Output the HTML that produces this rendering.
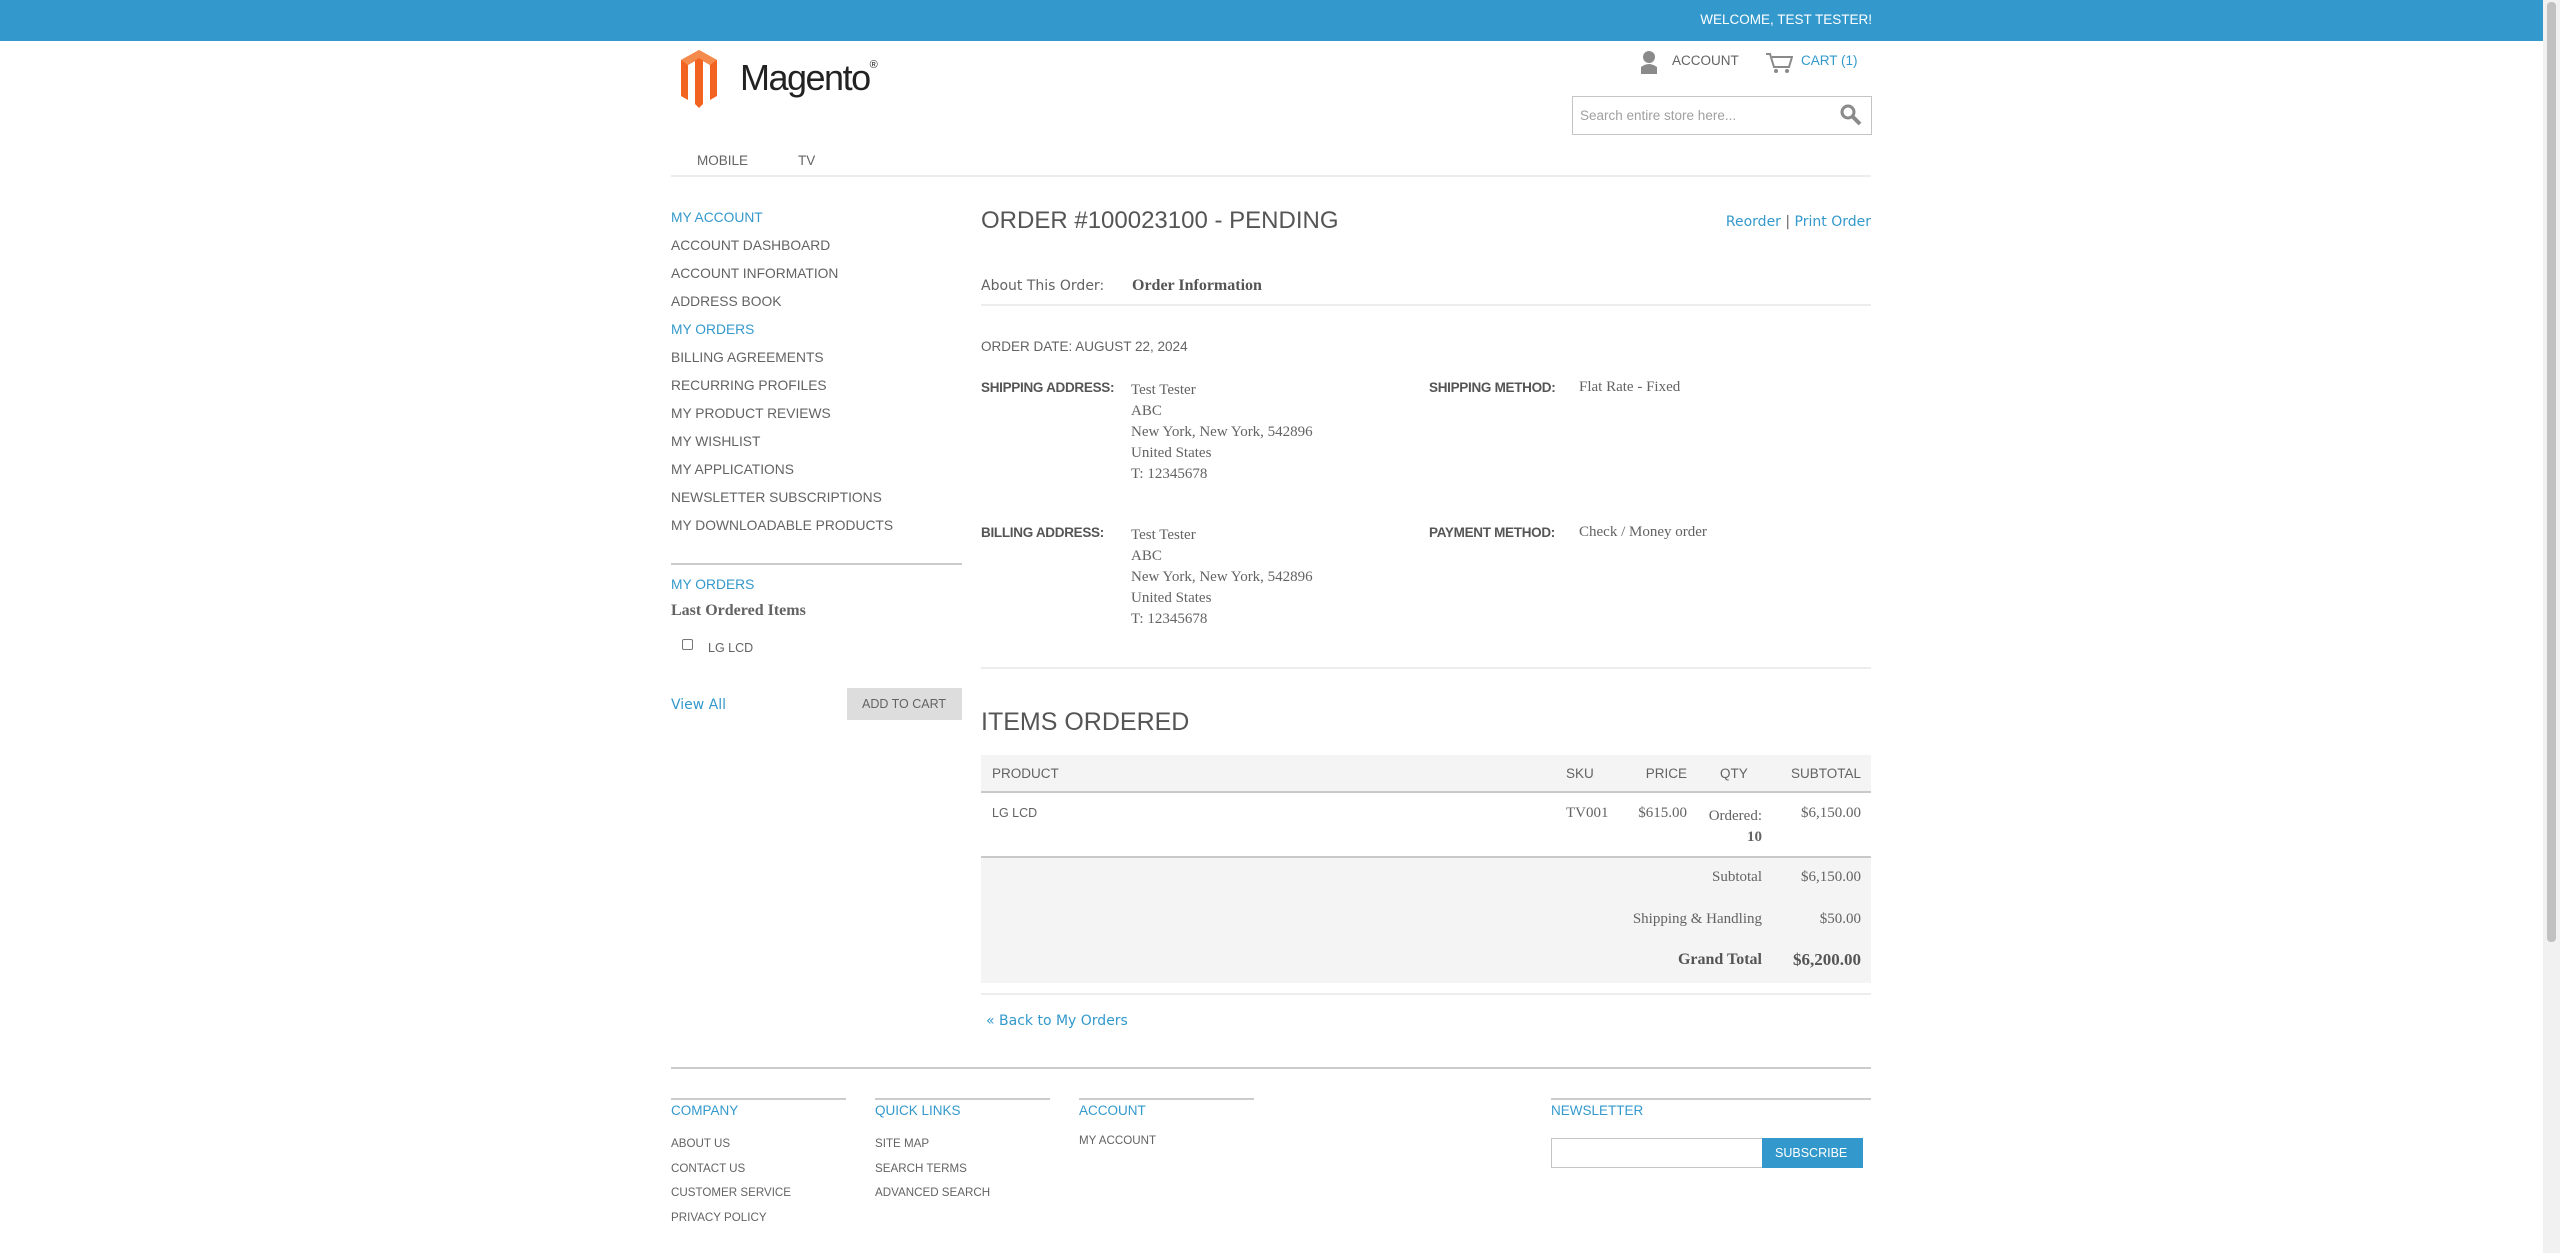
<!DOCTYPE html>
<html><head><meta charset="utf-8"><style>
*{margin:0;padding:0;box-sizing:border-box}
body{width:2560px;height:1253px;background:#fff;position:relative;overflow:hidden;font-family:"Liberation Sans",sans-serif;color:#636363}
.a{position:absolute;white-space:nowrap;line-height:1}
.s{font-family:"Liberation Serif",serif}
.b{color:#3399cc}
.hr{position:absolute;height:2px;background:#ededed}
.nav{font-size:13.8px;left:671px}
.f{font-size:11.6px}
.v{font-family:"DejaVu Sans",sans-serif}
</style></head><body>
<div style="position:absolute;left:0;top:0;width:2543px;height:41px;background:#3399cc"></div>
<div class="a" style="right:688px;top:13px;font-size:13.5px;color:#fff">WELCOME, TEST TESTER!</div>
<div style="position:absolute;left:2543px;top:0;width:17px;height:1253px;background:#f1f1f1"></div>
<div style="position:absolute;left:2547px;top:2px;width:9px;height:940px;background:#c1c1c1;border-radius:4px"></div>

<svg style="position:absolute;left:681px;top:50px" width="36" height="58" viewBox="0 0 36 58"><path d="M18 0 L36 10 V46 L29 50 V15 L22 11 V54 L18 58 L14 54 V11 L7 15 V50 L0 46 V10 Z" fill="#f26322"/><path d="M18 0 L36 10 L29 15 L18 8 L7 15 L0 10Z" fill="#f58a4d"/></svg>
<div class="a" style="left:740px;top:60px;font-size:36px;color:#222;letter-spacing:-1.5px">Magento<span style="font-size:11px;vertical-align:top;letter-spacing:0">®</span></div>

<svg style="position:absolute;left:1638px;top:50px" width="22" height="24" viewBox="0 0 22 24"><circle cx="11" cy="7" r="6" fill="#8a8a8a"/><path d="M3 24 V17 Q11 11 19 17 V24Z" fill="#8a8a8a"/></svg>
<div class="a" style="left:1672px;top:54px;font-size:13.5px">ACCOUNT</div>
<svg style="position:absolute;left:1765px;top:52px" width="28" height="22" viewBox="0 0 28 22"><path d="M1 2h4l4 13h15l3-10H7" fill="none" stroke="#8a8a8a" stroke-width="2"/><circle cx="11" cy="19" r="2" fill="#8a8a8a"/><circle cx="22" cy="19" r="2" fill="#8a8a8a"/></svg>
<div class="a b" style="left:1801px;top:54px;font-size:13.5px">CART (1)</div>

<div style="position:absolute;left:1572px;top:96px;width:300px;height:39px;border:1px solid #c4c4c4"></div>
<div class="a" style="left:1580px;top:109px;font-size:13.5px;color:#a0a0a0">Search entire store here...</div>
<svg style="position:absolute;left:1840px;top:104px" width="22" height="22" viewBox="0 0 22 22"><circle cx="8" cy="8" r="6" fill="none" stroke="#8a8a8a" stroke-width="3"/><path d="M12 12l8 8" stroke="#8a8a8a" stroke-width="4"/></svg>

<div class="a" style="left:697px;top:154px;font-size:13.5px">MOBILE</div>
<div class="a" style="left:798px;top:154px;font-size:13.5px">TV</div>
<div class="hr" style="left:671px;top:175px;width:1200px"></div>

<div class="a nav b" style="top:211px">MY ACCOUNT</div>
<div class="a nav" style="top:239px">ACCOUNT DASHBOARD</div>
<div class="a nav" style="top:267px">ACCOUNT INFORMATION</div>
<div class="a nav" style="top:295px">ADDRESS BOOK</div>
<div class="a nav b" style="top:323px">MY ORDERS</div>
<div class="a nav" style="top:351px">BILLING AGREEMENTS</div>
<div class="a nav" style="top:379px">RECURRING PROFILES</div>
<div class="a nav" style="top:407px">MY PRODUCT REVIEWS</div>
<div class="a nav" style="top:435px">MY WISHLIST</div>
<div class="a nav" style="top:463px">MY APPLICATIONS</div>
<div class="a nav" style="top:491px">NEWSLETTER SUBSCRIPTIONS</div>
<div class="a nav" style="top:519px">MY DOWNLOADABLE PRODUCTS</div>
<div class="hr" style="left:671px;top:563px;width:291px;background:#cccccc"></div>
<div class="a nav b" style="top:578px">MY ORDERS</div>
<div class="a s" style="left:671px;top:603px;font-size:16px;font-weight:bold">Last Ordered Items</div>
<div style="position:absolute;left:682px;top:639px;width:11px;height:11px;border:1px solid #767676;border-radius:2px"></div>
<div class="a" style="left:708px;top:642px;font-size:12.5px">LG LCD</div>
<div class="a b v" style="left:671px;top:698px;font-size:14px">View All</div>
<div style="position:absolute;left:847px;top:688px;width:115px;height:32px;background:#dddddd"></div>
<div class="a" style="left:862px;top:698px;font-size:12.5px">ADD TO CART</div>

<div class="a" style="left:981px;top:209px;font-size:24px;color:#555">ORDER #100023100 - PENDING</div>
<div class="a b v" style="right:689px;top:215px;font-size:14px">Reorder <span style="color:#636363">|</span> Print Order</div>
<div class="a v" style="left:981px;top:279px;font-size:14px">About This Order:</div>
<div class="a s" style="left:1132px;top:278px;font-size:16px;font-weight:bold;color:#555">Order Information</div>
<div class="hr" style="left:981px;top:304px;width:890px"></div>
<div class="a" style="left:981px;top:340px;font-size:13.5px">ORDER DATE: AUGUST 22, 2024</div>
<div class="a" style="left:981px;top:381px;font-size:13.5px;font-weight:bold;color:#555;letter-spacing:-0.3px">SHIPPING ADDRESS:</div>
<div class="a s" style="left:1131px;top:380px;font-size:15px;line-height:21px">Test Tester<br>ABC<br>New York, New York, 542896<br>United States<br>T: 12345678</div>
<div class="a" style="left:1429px;top:381px;font-size:13.5px;font-weight:bold;color:#555;letter-spacing:-0.3px">SHIPPING METHOD:</div>
<div class="a s" style="left:1579px;top:380px;font-size:15px">Flat Rate - Fixed</div>
<div class="a" style="left:981px;top:526px;font-size:13.5px;font-weight:bold;color:#555;letter-spacing:-0.3px">BILLING ADDRESS:</div>
<div class="a s" style="left:1131px;top:525px;font-size:15px;line-height:21px">Test Tester<br>ABC<br>New York, New York, 542896<br>United States<br>T: 12345678</div>
<div class="a" style="left:1429px;top:526px;font-size:13.5px;font-weight:bold;color:#555;letter-spacing:-0.3px">PAYMENT METHOD:</div>
<div class="a s" style="left:1579px;top:525px;font-size:15px">Check / Money order</div>
<div class="hr" style="left:981px;top:667px;width:890px"></div>

<div class="a" style="left:981px;top:710px;font-size:25px;color:#555">ITEMS ORDERED</div>
<div style="position:absolute;left:981px;top:755px;width:890px;height:38px;background:#f4f4f4;border-bottom:2px solid #c9c9c9"></div>
<div class="a" style="left:992px;top:767px;font-size:13.5px">PRODUCT</div>
<div class="a" style="left:1566px;top:767px;font-size:13.5px">SKU</div>
<div class="a" style="right:873px;top:767px;font-size:13.5px">PRICE</div>
<div class="a" style="left:1720px;top:767px;font-size:13.5px">QTY</div>
<div class="a" style="right:699px;top:767px;font-size:13.5px">SUBTOTAL</div>
<div class="a" style="left:992px;top:807px;font-size:12.5px">LG LCD</div>
<div class="a s" style="left:1566px;top:806px;font-size:15px">TV001</div>
<div class="a s" style="right:873px;top:806px;font-size:15px">$615.00</div>
<div class="a s" style="right:798px;top:806px;font-size:15px;text-align:right;line-height:21px">Ordered:<br><b>10</b></div>
<div class="a s" style="right:699px;top:806px;font-size:15px">$6,150.00</div>
<div style="position:absolute;left:981px;top:856px;width:890px;height:127px;background:#f4f4f4;border-top:2px solid #c9c9c9"></div>
<div class="a s" style="right:798px;top:870px;font-size:15px">Subtotal</div>
<div class="a s" style="right:699px;top:870px;font-size:15px">$6,150.00</div>
<div class="a s" style="right:798px;top:912px;font-size:15px">Shipping &amp; Handling</div>
<div class="a s" style="right:699px;top:912px;font-size:15px">$50.00</div>
<div class="a s" style="right:798px;top:952px;font-size:16px;font-weight:bold;color:#555">Grand Total</div>
<div class="a s" style="right:699px;top:951px;font-size:17px;font-weight:bold;color:#555">$6,200.00</div>
<div class="hr" style="left:981px;top:993px;width:890px"></div>
<div class="a b v" style="left:986px;top:1014px;font-size:14px">« Back to My Orders</div>

<div class="hr" style="left:671px;top:1067px;width:1200px;background:#cccccc"></div>
<div class="hr" style="left:671px;top:1098px;width:175px;background:#cccccc"></div>
<div class="hr" style="left:875px;top:1098px;width:175px;background:#cccccc"></div>
<div class="hr" style="left:1079px;top:1098px;width:175px;background:#cccccc"></div>
<div class="hr" style="left:1551px;top:1098px;width:320px;background:#cccccc"></div>
<div class="a b" style="left:671px;top:1104px;font-size:13.5px">COMPANY</div>
<div class="a b" style="left:875px;top:1104px;font-size:13.5px">QUICK LINKS</div>
<div class="a b" style="left:1079px;top:1104px;font-size:13.5px">ACCOUNT</div>
<div class="a b" style="left:1551px;top:1104px;font-size:13.5px">NEWSLETTER</div>
<div class="a f" style="left:671px;top:1132px;line-height:24.6px">ABOUT US<br>CONTACT US<br>CUSTOMER SERVICE<br>PRIVACY POLICY</div>
<div class="a f" style="left:875px;top:1132px;line-height:24.6px">SITE MAP<br>SEARCH TERMS<br>ADVANCED SEARCH</div>
<div class="a f" style="left:1079px;top:1135px">MY ACCOUNT</div>
<div style="position:absolute;left:1551px;top:1138px;width:212px;height:30px;border:1px solid #c4c4c4"></div>
<div style="position:absolute;left:1762px;top:1138px;width:101px;height:30px;background:#3399cc"></div>
<div class="a" style="left:1775px;top:1147px;font-size:12.5px;color:#fff">SUBSCRIBE</div>
</body></html>
